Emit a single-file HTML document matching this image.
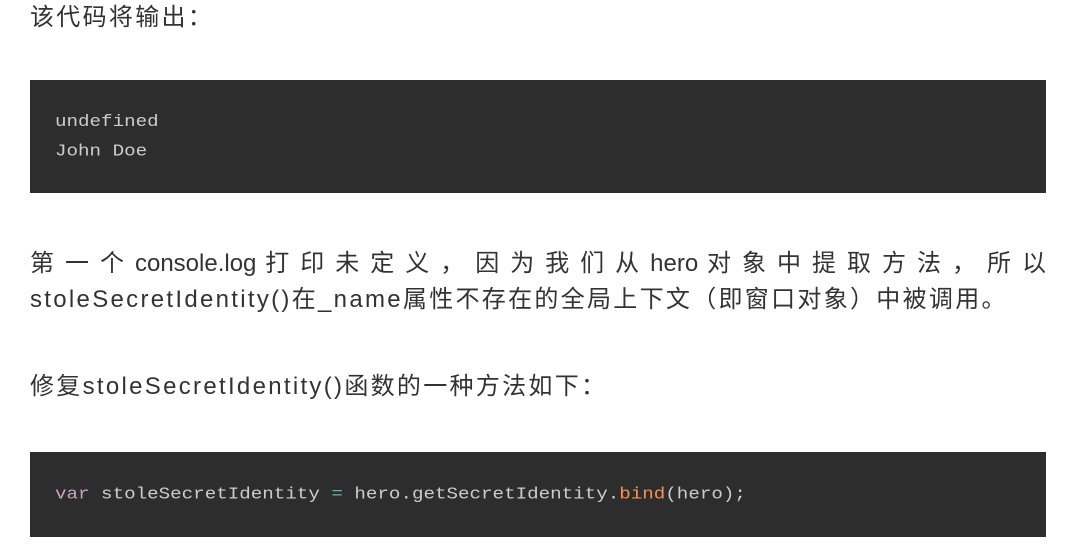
<!DOCTYPE html>
<html><head><meta charset="utf-8"><style>
body{margin:0;background:#fff;width:1078px;height:557px;overflow:hidden;font-family:"Liberation Sans","Noto Sans CJK SC",sans-serif;color:#333;}
.p{position:absolute;left:30px;width:1016px;font-size:24px;line-height:36px;letter-spacing:2.3px;white-space:nowrap;}
.code{position:absolute;left:30px;width:1016px;background:#2d2d2d;font-family:"Liberation Mono",monospace;font-size:19.2px;color:#ccc;}
.code div{position:absolute;left:25px;white-space:pre;line-height:28px;transform:scaleY(0.85);transform-origin:left center;}
</style></head><body>
<div class="p" style="top:0">该代码将输出：</div>
<div class="code" style="top:80px;height:113px">
<div style="top:28px">undefined</div>
<div style="top:57px">John Doe</div>
</div>
<div class="p" style="top:246px;text-align:justify;text-align-last:justify;letter-spacing:0;">第 一 个 console.log 打 印 未 定 义 ， 因 为 我 们 从 hero 对 象 中 提 取 方 法 ， 所 以</div>
<div class="p" style="top:282px">stoleSecretIdentity()在_name属性不存在的全局上下文（即窗口对象）中被调用。</div>
<div class="p" style="top:369px">修复stoleSecretIdentity()函数的一种方法如下：</div>
<div class="code" style="top:452px;height:85px">
<div style="top:28px"><span style="color:#c5a5c5">var</span> stoleSecretIdentity <span style="color:#5fb3b3">=</span> hero.getSecretIdentity.<span style="color:#f99157">bind</span>(hero);</div>
</div>
</body></html>
